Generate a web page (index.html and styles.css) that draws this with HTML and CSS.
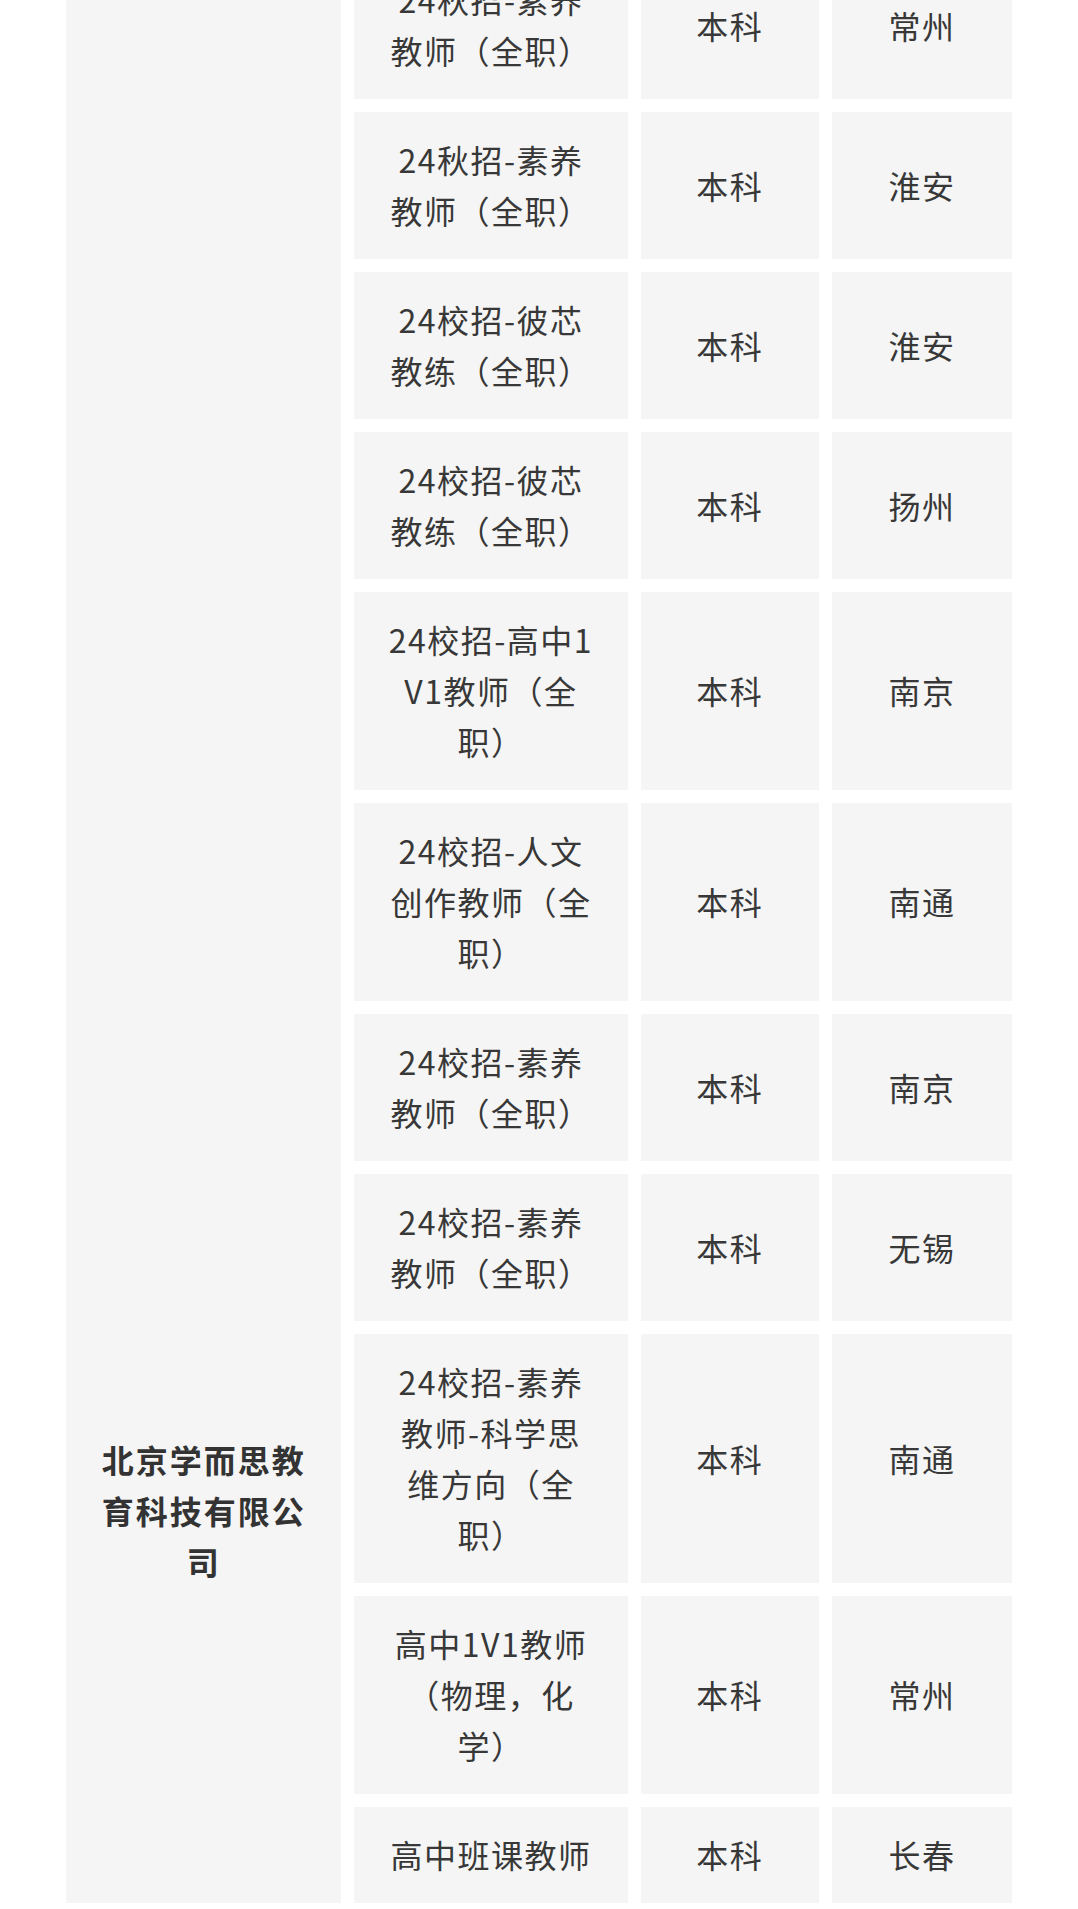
FILE: index.html
```html
<!DOCTYPE html>
<html lang="zh-CN">
<head>
<meta charset="utf-8">
<title>招聘岗位</title>
<link rel="stylesheet" href="styles.css">
</head>
<body>
<div class="page">
  <table class="jobs">
    <colgroup>
      <col class="c-company">
      <col class="c-job">
      <col class="c-degree">
      <col class="c-city">
    </colgroup>
    <tbody>
      <tr>
        <td class="company" rowspan="11">北京学而思教育科技有限公司</td>
        <td class="job">24秋招-素养教师（全职）</td>
        <td>本科</td>
        <td>常州</td>
      </tr>
      <tr>
        <td class="job">24秋招-素养教师（全职）</td>
        <td>本科</td>
        <td>淮安</td>
      </tr>
      <tr>
        <td class="job">24校招-彼芯教练（全职）</td>
        <td>本科</td>
        <td>淮安</td>
      </tr>
      <tr>
        <td class="job">24校招-彼芯教练（全职）</td>
        <td>本科</td>
        <td>扬州</td>
      </tr>
      <tr>
        <td class="job">24校招-高中1V1教师（全职）</td>
        <td>本科</td>
        <td>南京</td>
      </tr>
      <tr>
        <td class="job">24校招-人文创作教师（全职）</td>
        <td>本科</td>
        <td>南通</td>
      </tr>
      <tr>
        <td class="job">24校招-素养教师（全职）</td>
        <td>本科</td>
        <td>南京</td>
      </tr>
      <tr>
        <td class="job">24校招-素养教师（全职）</td>
        <td>本科</td>
        <td>无锡</td>
      </tr>
      <tr>
        <td class="job">24校招-素养教师-科学思维方向（全职）</td>
        <td>本科</td>
        <td>南通</td>
      </tr>
      <tr>
        <td class="job">高中1V1教师（物理，化学）</td>
        <td>本科</td>
        <td>常州</td>
      </tr>
      <tr>
        <td class="job">高中班课教师</td>
        <td>本科</td>
        <td>长春</td>
      </tr>
    </tbody>
  </table>
</div>
</body>
</html>
```

FILE: styles.css
```css
html, body {
  margin: 0;
  padding: 0;
  background: #ffffff;
}

body {
  font-family: "Noto Sans CJK SC", "Noto Sans", sans-serif;
  color: #383838;
  overflow: hidden;
}

.page {
  /* page is scrolled: the first row is partly above the top edge */
  margin-top: -61.3px;
}

.jobs {
  width: 972px;
  margin: 0 auto;
  table-layout: fixed;
  border-collapse: separate;
  border-spacing: 13.2px 13.3px;
}

.c-company { width: 275px; }
.c-job { width: 273px; }
.c-degree { width: 178px; }
.c-city { width: 180px; }

.jobs td {
  background: #f5f5f5;
  font-size: 32px;
  line-height: 51px;
  letter-spacing: 1.5px;
  text-align: center;
  vertical-align: middle;
  padding: 22.5px 8px;
  word-break: break-all;
  text-spacing-trim: space-all;
}

.jobs td.job {
  padding: 22.5px 32px;
}

.jobs td.company {
  font-weight: 700;
  letter-spacing: 2px;
  color: #333333;
  vertical-align: bottom;
  padding: 0 27px 316px;
}
```
